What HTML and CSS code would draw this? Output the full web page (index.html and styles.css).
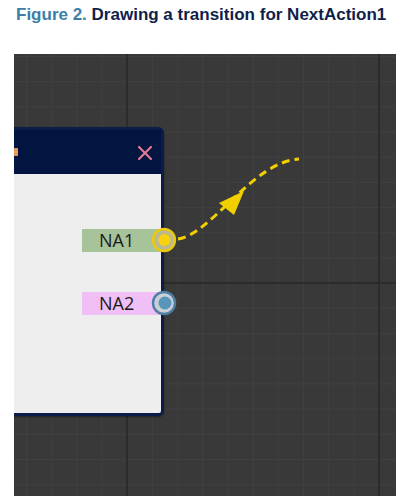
FILE: index.html
```html
<!DOCTYPE html>
<html>
<head>
<meta charset="utf-8">
<link rel="stylesheet" href="styles.css">
</head>
<body>
<h1 class="caption"><span class="fig">Figure 2.</span> Drawing a transition for NextAction1</h1>
<div class="canvas">
  <div class="node">
    <div class="node-header">
      <span class="node-icon"></span>
      <svg class="close" width="16" height="16" viewBox="0 0 16 16"><path d="M2 2 L14 14 M14 2 L2 14" stroke="#e07a92" stroke-width="2.2" stroke-linecap="round"/></svg>
    </div>
    <div class="node-body">
      <div class="out">
        <span class="label na1">NA1</span>
        <svg class="port" width="28" height="28" viewBox="0 0 28 28"><circle cx="14" cy="14" r="11" fill="#bdb98e" stroke="#ecc90a" stroke-width="2.4"/><circle cx="14.5" cy="14" r="6" fill="#f6d30c"/></svg>
      </div>
      <div class="out">
        <span class="label na2">NA2</span>
        <svg class="port" width="28" height="28" viewBox="0 0 28 28"><circle cx="14" cy="14" r="11" fill="#c9cfd6" stroke="#4d7ea6" stroke-width="2.4"/><circle cx="15" cy="14" r="6.5" fill="#5795ba"/></svg>
      </div>
    </div>
  </div>
  <svg class="wire" width="382" height="442" viewBox="0 0 382 442">
    <path d="M164 185 C 198 180, 238 108, 285 105" fill="none" stroke="#f2d000" stroke-width="3" stroke-dasharray="8 5"/>
    <polygon points="230,137 205,149 220,161" fill="#f2d000"/>
  </svg>
</div>
</body>
</html>
```
FILE: styles.css
```css
html, body {
  margin: 0;
  padding: 0;
  background: #ffffff;
}
.caption {
  margin: 0;
  padding: 5px 0 0 16px;
  height: 47px;
  box-sizing: border-box;
  font-family: "Liberation Sans", Arial, sans-serif;
  font-weight: bold;
  font-size: 17px;
  line-height: 19px;
  color: #0f1f4b;
}
.fig {
  color: #3d7ea8;
}
.canvas {
  position: relative;
  margin: 7px 0 0 14px;
  width: 382px;
  height: 442px;
  overflow: hidden;
  background-color: #393939;
  background-image:
    linear-gradient(to right, #2b2b2b 0, #2b2b2b 2px, transparent 2px),
    linear-gradient(to bottom, #2b2b2b 0, #2b2b2b 2px, transparent 2px),
    linear-gradient(to right, #404040 0, #404040 1px, transparent 1px),
    linear-gradient(to bottom, #404040 0, #404040 1px, transparent 1px);
  background-size: 252px 100%, 100% 252px, 25.2px 100%, 100% 25.2px;
  background-position: 112px 0, 0 228px, 12px 0, 0 2px;
}
.node {
  position: absolute;
  left: -120px;
  top: 73px;
  width: 270px;
  height: 289px;
  box-sizing: border-box;
  border: 3px solid #0b1b4a;
  border-radius: 6px;
  background: #0b1b4a;
  display: flex;
  flex-direction: column;
  box-shadow: 0 1px 2px rgba(0,0,0,0.4);
}
.node-header {
  height: 44px;
  flex: none;
  background: #021440;
  display: flex;
  align-items: center;
  justify-content: space-between;
  padding: 0 8px 0 0;
}
.node-icon {
  display: block;
  width: 4px;
  height: 8px;
  margin-left: 117px;
  background: #e89a5a;
  border-radius: 1px;
}
.close {
  display: block;
  margin-top: 2px;
}
.node-body {
  flex: 1;
  background: #eeeeee;
  border-radius: 0 0 2px 2px;
  padding-top: 55px;
  display: flex;
  flex-direction: column;
  gap: 40px;
}
.out {
  position: relative;
  display: flex;
  justify-content: flex-end;
}
.label {
  width: 79px;
  height: 23px;
  box-sizing: border-box;
  padding-left: 17px;
  font-family: "Open Sans", "DejaVu Sans", sans-serif;
  font-size: 18px;
  line-height: 23px;
  color: #1a1a1a;
}
.na1 {
  background: #a6c39a;
}
.na2 {
  background: #efbff5;
}
.port {
  position: absolute;
  right: -17px;
  top: -3px;
}
.wire {
  position: absolute;
  left: 0;
  top: 0;
}
```
